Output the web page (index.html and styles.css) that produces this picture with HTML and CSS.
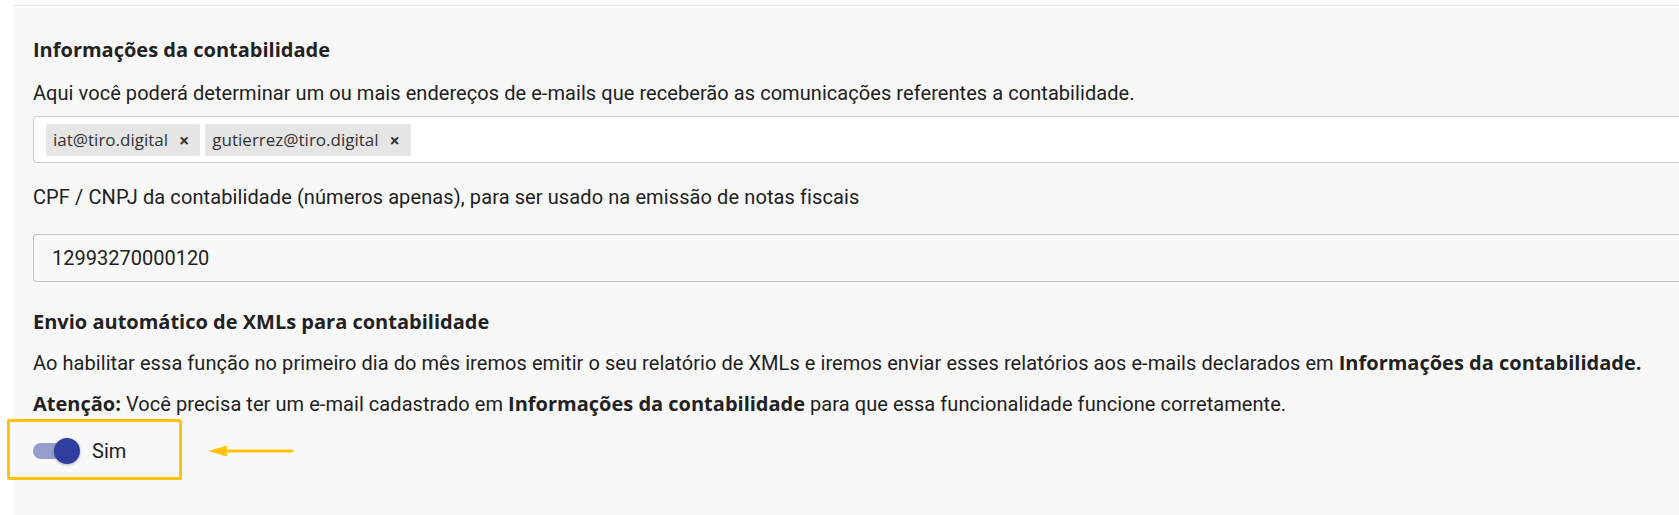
FILE: index.html
```html
<!DOCTYPE html>
<html lang="pt-BR">
<head>
<meta charset="utf-8">
<title>Contabilidade</title>
<link rel="stylesheet" href="styles.css">
</head>
<body>
<div class="page">
  <div class="panel">
    <h2 class="title title-first">Informações da contabilidade</h2>
    <p class="desc">Aqui você poderá determinar um ou mais endereços de e-mails que receberão as comunicações referentes a contabilidade.</p>
    <div class="tags-input">
      <span class="tag">iat@tiro.digital <span class="tag-x">×</span></span>
      <span class="tag">gutierrez@tiro.digital <span class="tag-x">×</span></span>
    </div>
    <label class="field-label">CPF / CNPJ da contabilidade (números apenas), para ser usado na emissão de notas fiscais</label>
    <div class="text-input">12993270000120</div>
    <h2 class="title title-second">Envio automático de XMLs para contabilidade</h2>
    <p class="desc desc-gap">Ao habilitar essa função no primeiro dia do mês iremos emitir o seu relatório de XMLs e iremos enviar esses relatórios aos e-mails declarados em <b>Informações da contabilidade.</b></p>
    <p class="desc desc-gap"><b>Atenção:</b> Você precisa ter um e-mail cadastrado em <b>Informações da contabilidade</b> para que essa funcionalidade funcione corretamente.</p>
    <div class="toggle-row">
      <div class="highlight">
        <span class="switch"><span class="switch-track"></span><span class="switch-thumb"></span></span>
        <span class="switch-label">Sim</span>
      </div>
      <svg class="arrow" width="88" height="14" viewBox="0 0 88 14">
        <path d="M18 7 H85" stroke="#ffc20e" stroke-width="3" stroke-linecap="round" fill="none"/>
        <path d="M1 7 L20 1.5 L20 12.5 Z" fill="#ffc20e"/>
      </svg>
    </div>
  </div>
</div>
</body>
</html>
```

FILE: styles.css
```css
* { box-sizing: border-box; }
html, body { margin: 0; padding: 0; background: #ffffff; }
body {
  width: 1679px;
  height: 515px;
  overflow: hidden;
  font-family: Roboto, "Liberation Sans", Arial, sans-serif;
  color: #212121;
}
.page {
  padding-top: 5px;
  padding-left: 13px;
}
.panel {
  background: #f8f8f8;
  border-top: 1px solid #e6e6e6;
  padding: 32px 0 40px 20px;
  min-height: 510px;
}
.title {
  margin: 0;
  font-family: "Open Sans", "Liberation Sans", sans-serif;
  font-weight: 700;
  font-size: 20px;
  line-height: 24px;
  color: #222;
}
.desc {
  margin: 19px 0 0;
  font-size: 20px;
  line-height: 24px;
  letter-spacing: 0.06px;
}
.desc b {
  font-family: "Open Sans", "Liberation Sans", sans-serif;
  font-weight: 700;
  font-size: 20px;
  letter-spacing: 0;
}
.desc-gap { margin-top: 17px; }
.tags-input {
  margin-top: 11px;
  height: 47px;
  margin-right: -20px;
  background: #ffffff;
  border: 1px solid #cfcfcf;
  border-right: none;
  border-radius: 4px 0 0 4px;
  display: flex;
  align-items: center;
  gap: 5px;
  padding-left: 12px;
}
.tag {
  display: inline-flex;
  align-items: center;
  height: 32px;
  padding: 0 11px 0 7px;
  background: #e5e5e5;
  border-radius: 2px;
  font-family: "Open Sans", "Liberation Sans", sans-serif;
  font-size: 17px;
  color: #333;
}
.tag-x {
  font-weight: 700;
  font-size: 18px;
  margin-left: 11px;
}
.field-label {
  display: block;
  margin-top: 22px;
  font-size: 20px;
  line-height: 24px;
  letter-spacing: 0.1px;
}
.text-input {
  margin-top: 25px;
  height: 48px;
  border: 1px solid #c4c4c4;
  border-right: none;
  border-radius: 4px 0 0 4px;
  display: flex;
  align-items: center;
  padding-left: 18px;
  font-size: 20px;
}
.title-second { margin-top: 28px; }
.toggle-row {
  margin-top: 3px;
  display: flex;
  align-items: center;
  gap: 25px;
}
.highlight {
  margin-left: -26px;
  width: 175px;
  height: 61px;
  border: 3px solid #ffc20e;
  border-radius: 2px;
  display: flex;
  align-items: center;
  padding-left: 23px;
  padding-top: 2px;
  gap: 12px;
}
.switch {
  position: relative;
  width: 47px;
  height: 26px;
  display: inline-block;
}
.switch-track {
  position: absolute;
  left: 0;
  top: 5px;
  width: 36px;
  height: 16px;
  border-radius: 8px;
  background: #969ccd;
}
.switch-thumb {
  position: absolute;
  left: 21px;
  top: 0;
  width: 26px;
  height: 26px;
  border-radius: 50%;
  background: #303f9f;
  box-shadow: 0 1px 3px rgba(0,0,0,0.3);
}
.switch-label {
  font-size: 20px;
}
.arrow { display: block; margin-top: 2px; }
```
